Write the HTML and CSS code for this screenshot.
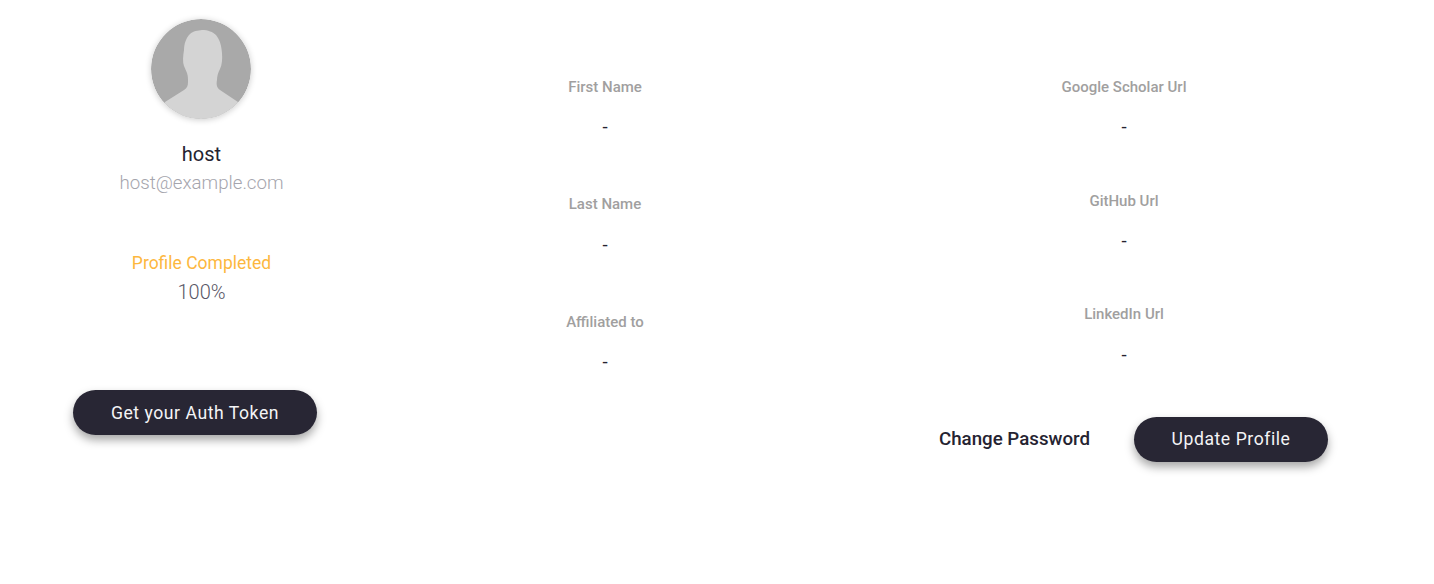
FILE: index.html
```html
<!DOCTYPE html>
<html lang="en">
<head>
    <meta charset="UTF-8">
    <title>Profile</title>
    <link rel="stylesheet" href="styles.css">
</head>
<body>
    <div class="profile">
        <div class="summary">
            <svg class="avatar" viewBox="0 0 100 100" aria-hidden="true">
                <defs>
                    <clipPath id="avatar-clip"><circle cx="50" cy="50" r="50"/></clipPath>
                </defs>
                <g clip-path="url(#avatar-clip)">
                    <rect width="100" height="100" fill="#a9a9a9"/>
                    <path fill="#d4d4d4" d="M51 11 C47 11.5 42 12 39 15 C35 19 33 25 33 31 C32 37 31.5 43 33 47 C34 49 35 52 36 54 C37 57 37 60 37 63 C37 67 36 69 33 71 L14 83 L14 100 L87 100 L87 83 L69 71 C66 69 65 66 66 61 C66 57 67 54 69 50 C71 46 71.5 40 71 34 C70.5 27 69 21 65 16 C62 13 57 11 51 11 Z"/>
                </g>
            </svg>
            <div class="username">host</div>
            <div class="email">host@example.com</div>
            <div class="completed-label">Profile Completed</div>
            <div class="completed-value">100%</div>
            <button class="btn token-btn">Get your Auth Token</button>
        </div>

        <div class="details names">
            <div class="field">
                <div class="field-label">First Name</div>
                <div class="field-value">-</div>
            </div>
            <div class="field">
                <div class="field-label">Last Name</div>
                <div class="field-value">-</div>
            </div>
            <div class="field">
                <div class="field-label">Affiliated to</div>
                <div class="field-value">-</div>
            </div>
        </div>

        <div class="links-col">
            <div class="details links">
                <div class="field">
                    <div class="field-label">Google Scholar Url</div>
                    <div class="field-value">-</div>
                </div>
                <div class="field">
                    <div class="field-label">GitHub Url</div>
                    <div class="field-value">-</div>
                </div>
                <div class="field">
                    <div class="field-label">LinkedIn Url</div>
                    <div class="field-value">-</div>
                </div>
            </div>
            <div class="actions">
                <a class="change-password">Change Password</a>
                <button class="btn update-btn">Update Profile</button>
            </div>
        </div>
    </div>
</body>
</html>
```

FILE: styles.css
```css
body {
    margin: 0;
    background: #fff;
    font-family: "Roboto", sans-serif;
    color: #252331;
}
.profile {
    display: grid;
    grid-template-columns: 402px 406px 1fr;
    min-height: 584px;
}
.summary {
    display: flex;
    flex-direction: column;
    align-items: center;
    padding-top: 19px;
    padding-left: 1px;
}
.avatar {
    width: 100px;
    height: 100px;
    margin-right: 1px;
    border-radius: 50%;
    box-shadow: 0 1px 6px rgba(0, 0, 0, 0.2);
}
.username {
    margin-top: 21px;
    font-size: 20px;
    line-height: 28px;
}
.email {
    margin-top: 1px;
    font-size: 18.72px;
    font-weight: 300;
    line-height: 28px;
    color: #a5a5ad;
}
.completed-label {
    margin-top: 52px;
    font-size: 17.5px;
    line-height: 28px;
    color: #fdb73e;
}
.completed-value {
    margin-top: 1px;
    font-size: 20px;
    font-weight: 300;
    line-height: 28px;
    color: #595766;
}
.btn {
    height: 45px;
    padding-bottom: 2px;
    border: none;
    border-radius: 23px;
    background: #282634;
    color: #f4f4f6;
    font-family: inherit;
    font-size: 17.6px;
    letter-spacing: 0.55px;
    box-shadow: 0 5px 10px rgba(0, 0, 0, 0.35);
}
.token-btn {
    width: 244px;
    margin-top: 84px;
    margin-right: 13px;
    padding-bottom: 0;
}
.details {
    display: flex;
    flex-direction: column;
    align-items: center;
    text-align: center;
    padding-top: 75.7px;
}
.names {
    gap: 52.2px;
}
.links {
    padding-top: 76px;
    gap: 48.3px;
}
.field-label {
    font-size: 15px;
    font-weight: 500;
    line-height: 22px;
    color: #a19f9f;
}
.field-value {
    margin-top: 15.4px;
    font-size: 18.72px;
    line-height: 28px;
}
.links-col {
    padding-left: 6px;
}
.actions {
    display: flex;
    align-items: center;
    gap: 44px;
    margin-top: 48.6px;
    padding-left: 125px;
}
.change-password {
    padding-bottom: 2px;
    font-size: 18.72px;
    font-weight: 500;
}
.update-btn {
    width: 194px;
}
```
